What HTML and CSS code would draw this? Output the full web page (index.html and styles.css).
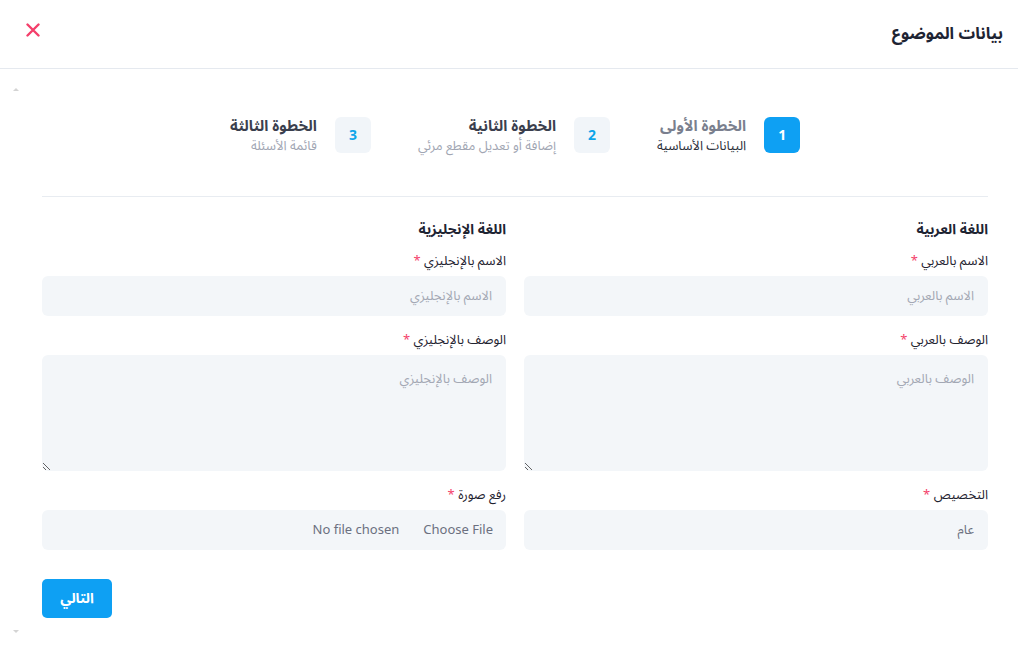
FILE: index.html
```html
<!DOCTYPE html>
<html lang="ar" dir="rtl">
<head>
<meta charset="utf-8">
<title>بيانات الموضوع</title>
<link rel="stylesheet" href="styles.css">
</head>
<body>
<div class="modal">
  <header class="modal-header">
    <h1 class="modal-title">بيانات الموضوع</h1>
    <button class="close-btn" type="button" aria-label="إغلاق">
      <svg width="14" height="14" viewBox="0 0 14 14"><path d="M1.5 1.5 L12.5 12.5 M12.5 1.5 L1.5 12.5" stroke="#f43f6b" stroke-width="2.4" stroke-linecap="round"/></svg>
    </button>
  </header>
  <div class="modal-body">
    <span class="scroll-arrow up"></span>
    <span class="scroll-arrow down"></span>
    <ol class="stepper">
      <li class="step active">
        <span class="step-num">1</span>
        <div class="step-text">
          <div class="step-title">الخطوة الأولى</div>
          <div class="step-sub">البيانات الأساسية</div>
        </div>
      </li>
      <li class="step">
        <span class="step-num">2</span>
        <div class="step-text">
          <div class="step-title">الخطوة الثانية</div>
          <div class="step-sub">إضافة أو تعديل مقطع مرئي</div>
        </div>
      </li>
      <li class="step">
        <span class="step-num">3</span>
        <div class="step-text">
          <div class="step-title">الخطوة الثالثة</div>
          <div class="step-sub">قائمة الأسئلة</div>
        </div>
      </li>
    </ol>
    <form class="form">
      <div class="form-grid">
        <div class="col">
          <h2 class="col-title">اللغة العربية</h2>
          <label class="field">
            <span class="label">الاسم بالعربي <span class="req">*</span></span>
            <input class="control" type="text" placeholder="الاسم بالعربي">
          </label>
          <label class="field">
            <span class="label">الوصف بالعربي <span class="req">*</span></span>
            <textarea class="control area" placeholder="الوصف بالعربي"></textarea>
          </label>
          <label class="field">
            <span class="label">التخصيص <span class="req">*</span></span>
            <select class="control select"><option>عام</option></select>
          </label>
        </div>
        <div class="col">
          <h2 class="col-title">اللغة الإنجليزية</h2>
          <label class="field">
            <span class="label">الاسم بالإنجليزي <span class="req">*</span></span>
            <input class="control" type="text" placeholder="الاسم بالإنجليزي">
          </label>
          <label class="field">
            <span class="label">الوصف بالإنجليزي <span class="req">*</span></span>
            <textarea class="control area" placeholder="الوصف بالإنجليزي"></textarea>
          </label>
          <label class="field">
            <span class="label">رفع صورة <span class="req">*</span></span>
            <input class="control file" type="file">
          </label>
        </div>
      </div>
      <div class="actions">
        <button class="btn-next" type="button">التالي</button>
      </div>
    </form>
  </div>
</div>
</body>
</html>
```
FILE: styles.css
```css
* { box-sizing: border-box; }
html, body { margin: 0; padding: 0; background: #fff; }
body {
  font-family: "Noto Sans Arabic", "DejaVu Sans", sans-serif;
  color: #1f2937;
  width: 1018px;
  height: 650px;
  overflow: hidden;
}
.modal { display: flex; flex-direction: column; height: 650px; }
.modal-header {
  height: 69px;
  border-bottom: 1px solid #e5e9ef;
  display: flex;
  align-items: center;
  justify-content: space-between;
  padding: 0 15px 2px 25px;
}
.modal-title {
  margin: 0;
  font-size: 16.5px;
  font-weight: 700;
  color: #1e2433;
}
.close-btn {
  border: 0; background: none; padding: 0; margin-bottom: 6px;
  width: 16px; height: 16px; display: flex; align-items: center; justify-content: center;
}
.modal-body {
  position: relative;
  flex: 1;
  padding: 46px 30px 0 42px;
}
.scroll-arrow {
  position: absolute; left: 13px;
  width: 0; height: 0;
  border-left: 3px solid transparent; border-right: 3px solid transparent;
}
.scroll-arrow.up { top: 19px; border-bottom: 3px solid #d4d4d4; }
.scroll-arrow.down { top: 561px; border-top: 3px solid #d4d4d4; }
.stepper {
  list-style: none; margin: 0; padding: 0 0 41px;
  display: flex; justify-content: center; gap: 47px;
  border-bottom: 1px solid #e8ecf1;
}
.step { display: flex; align-items: center; gap: 18px; }
.step-num {
  width: 36px; height: 36px; border-radius: 6px;
  background: #f1f5f9; color: #0ea5e9;
  display: flex; align-items: center; justify-content: center;
  font-size: 14px; font-weight: 700;
}
.step.active .step-num { background: #0ea0f3; color: #fff; }
.step-title { font-size: 15px; font-weight: 700; color: #3b3f4e; line-height: 22px; }
.step.active .step-title { color: #7a7f8e; }
.step-sub { font-size: 13px; color: #a1a6b3; line-height: 18px; }
.step.active .step-sub { color: #2b2f3a; }
.form-grid {
  display: grid; grid-template-columns: 1fr 1fr; gap: 18px;
  padding-top: 21px;
}
.col { display: flex; flex-direction: column; }
.col-title {
  margin: 0 0 9px; font-size: 14px; font-weight: 700; color: #1e2433; line-height: 24px;
}
.field { display: flex; flex-direction: column; margin-bottom: 14px; }
.label { font-size: 13px; color: #1f2330; line-height: 20px; margin-bottom: 5px; }
.req { color: #f43f6b; }
.control {
  font-family: inherit; font-size: 13px; color: #6b7080;
  background: #f3f6f9; border: 0; border-radius: 6px;
  height: 40px; padding: 0 14px; width: 100%; outline: none;
}
.control::placeholder { color: #a3a8b4; }
.area { height: 116px; padding: 10px 14px; resize: vertical; }
.select { appearance: none; -webkit-appearance: none; }
.file { padding: 0 13px; line-height: 40px; color: #6b7080; }
.file::file-selector-button {
  border: 0; background: none; font-family: inherit; font-size: 13px; color: #6b7080;
  margin-left: 24px; padding: 0;
}
.actions { padding-top: 15px; display: flex; justify-content: flex-end; }
.btn-next {
  width: 70px; height: 39px; border: 0; border-radius: 5px;
  background: #0ea0f3; color: #fff; font-family: inherit; font-size: 14px; font-weight: 700;
}
```
